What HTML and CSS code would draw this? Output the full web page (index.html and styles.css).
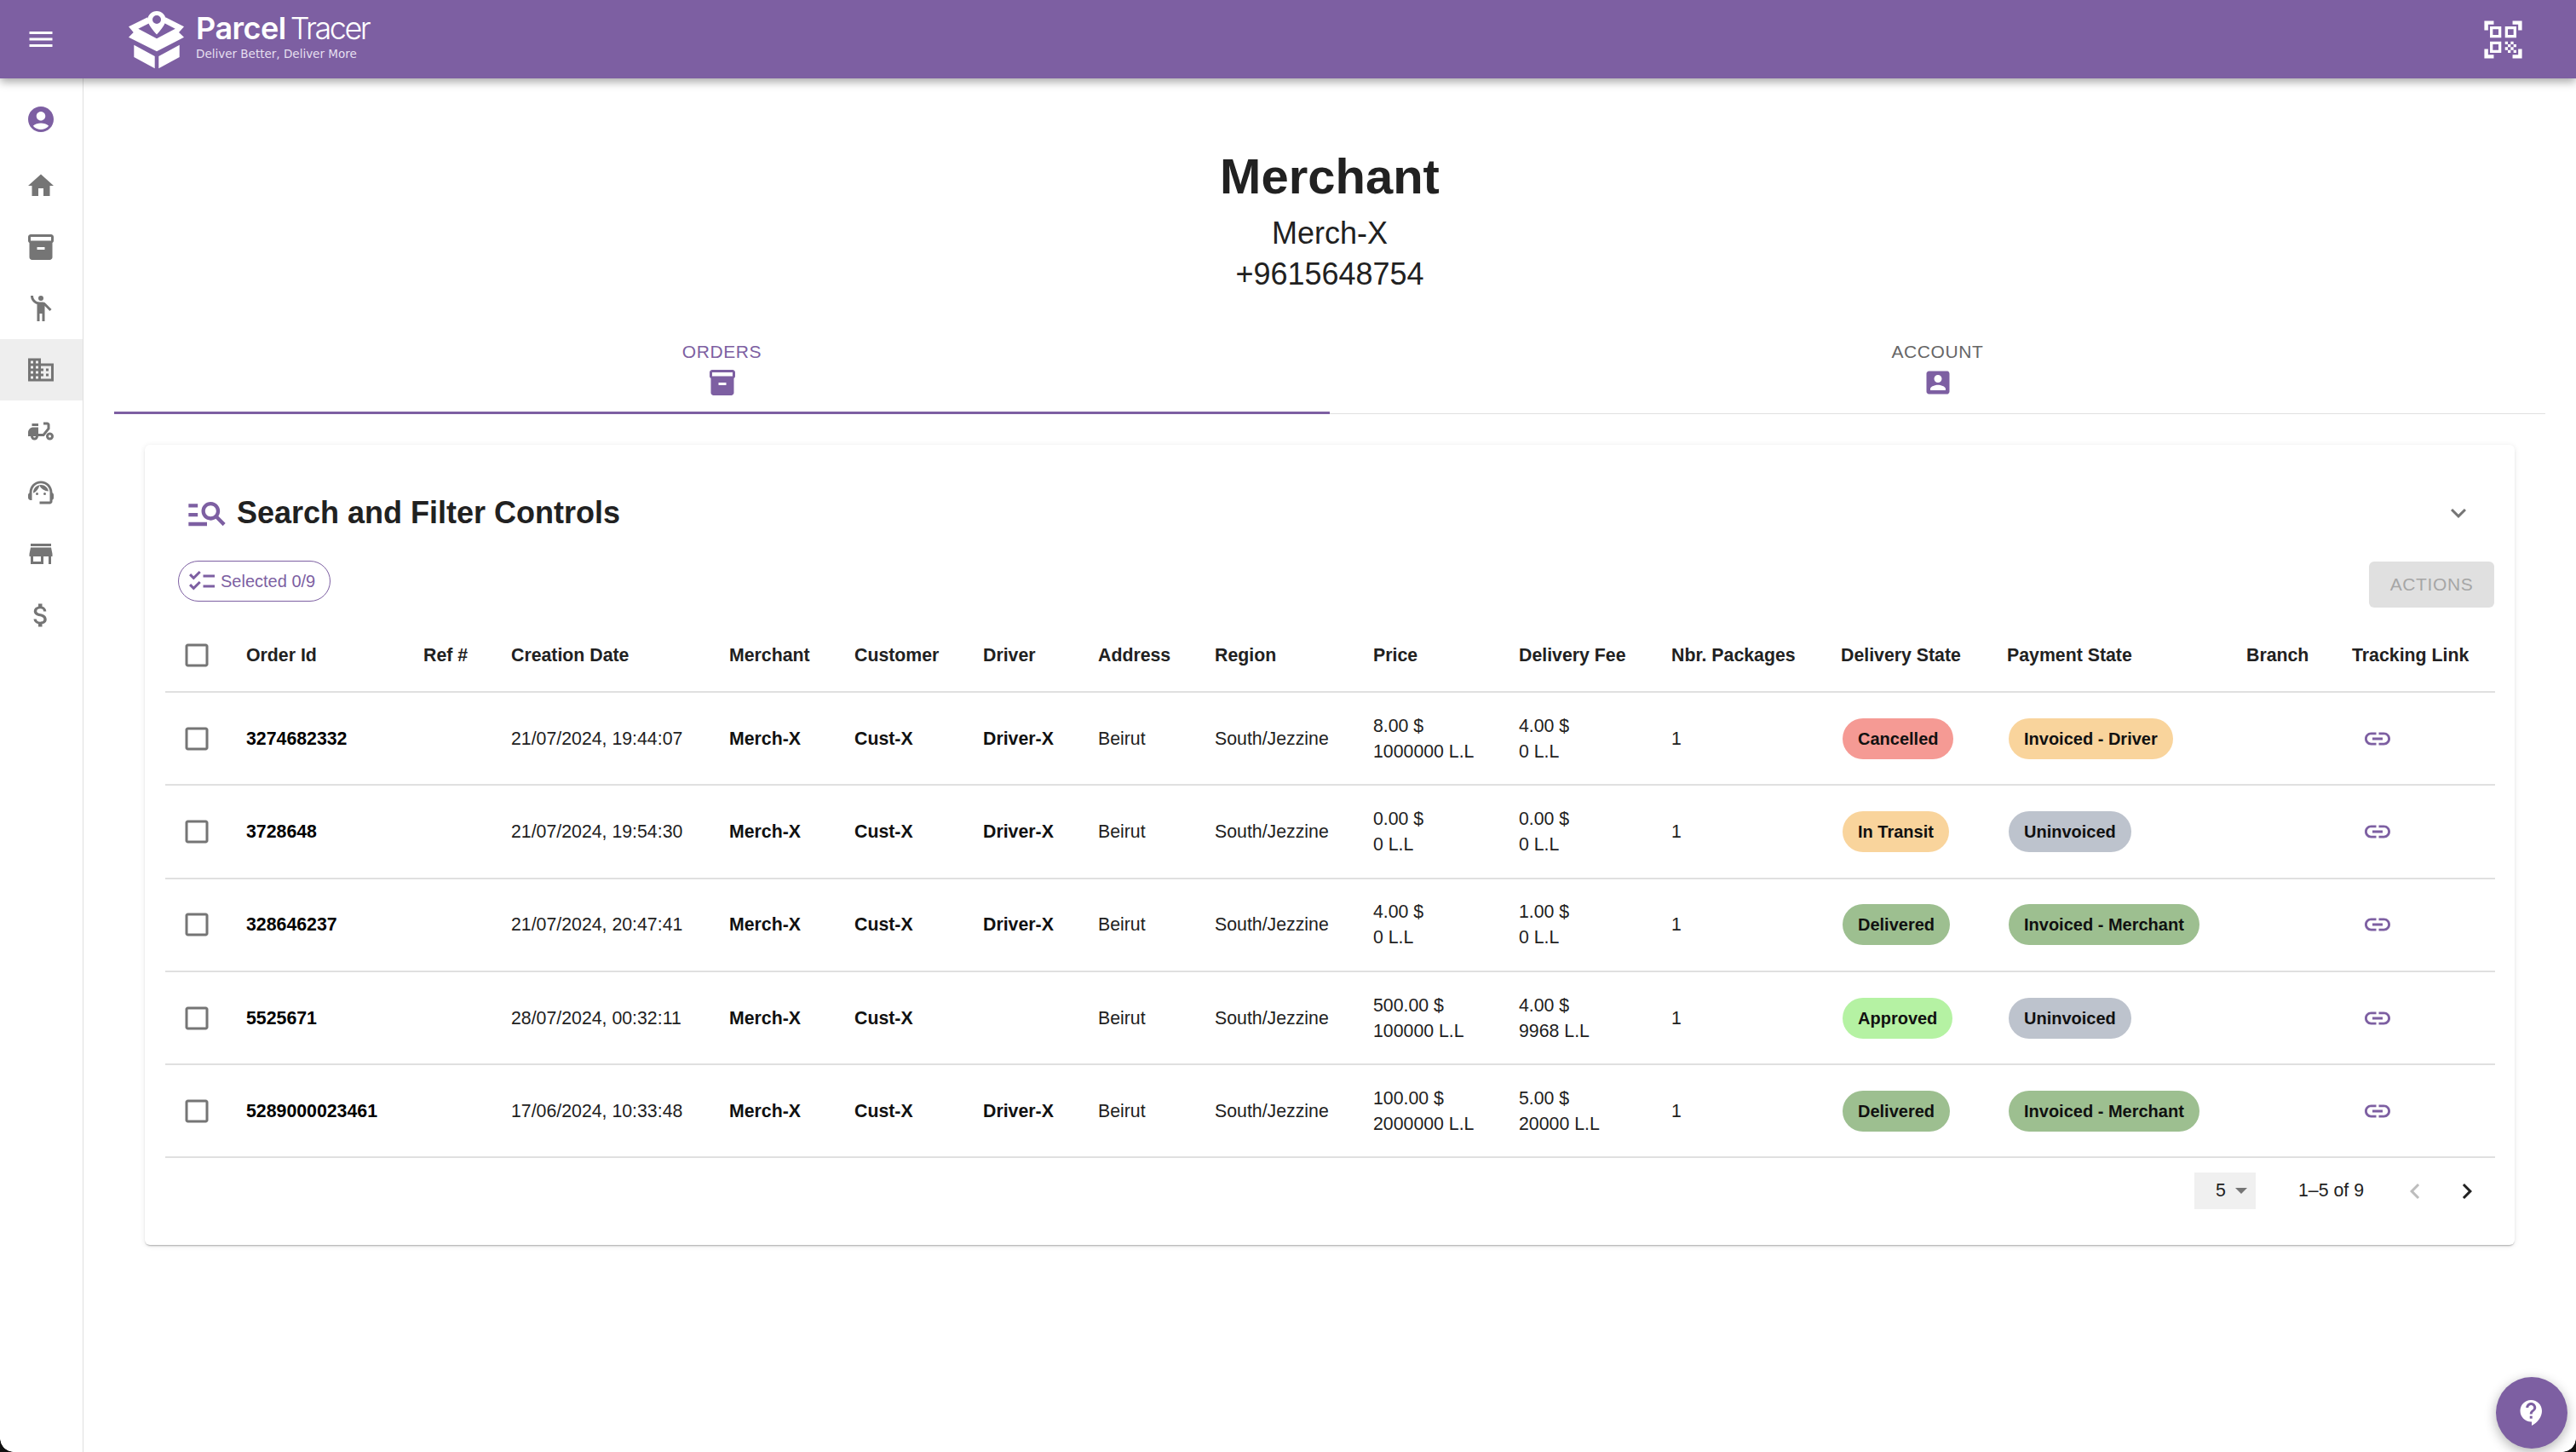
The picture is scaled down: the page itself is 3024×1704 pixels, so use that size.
FILE: index.html
```html
<!DOCTYPE html>
<html lang="en">
<head>
    <meta charset="UTF-8">
    <title>Parcel Tracer</title>
    <link rel="stylesheet" href="styles.css">
</head>
<body>
    <!-- shared icons -->
    <svg class="sprite">
        <symbol id="i-box" viewBox="0 0 24 24"><path d="M20 2H4c-1 0-2 .9-2 2v3.01c0 .72.43 1.34 1 1.69V20c0 1.1 1.1 2 2 2h14c.9 0 2-.9 2-2V8.7c.57-.35 1-.97 1-1.69V4c0-1.1-1-2-2-2zm-5 12H9v-2h6v2zm5-7H4V4l16-.02V7z"/></symbol>
        <symbol id="i-check" viewBox="0 0 24 24"><path d="M19 5v14H5V5h14m0-2H5c-1.1 0-2 .9-2 2v14c0 1.1.9 2 2 2h14c1.1 0 2-.9 2-2V5c0-1.1-.9-2-2-2z"/></symbol>
        <symbol id="i-link" viewBox="0 0 24 24"><path d="M3.9 12c0-1.71 1.39-3.1 3.1-3.1h4V7H7c-2.76 0-5 2.24-5 5s2.24 5 5 5h4v-1.9H7c-1.71 0-3.1-1.39-3.1-3.1zM8 13h8v-2H8v2zm9-6h-4v1.9h4c1.71 0 3.1 1.39 3.1 3.1s-1.39 3.1-3.1 3.1h-4V17h4c2.76 0 5-2.24 5-5s-2.24-5-5-5z"/></symbol>
    </svg>

    <header class="topbar">
        <svg class="icon menu-btn" viewBox="0 0 24 24"><path d="M3 18h18v-2H3v2zm0-5h18v-2H3v2zm0-7v2h18V6H3z"/></svg>
        <div class="logo">
            <svg class="logo-mark" viewBox="0 0 66 70">
                <path fill-rule="evenodd" d="M33 1c5.800 0 10.500 4.500 10.500 10C43.500 17 37 24 33 28.500 29 24 22.500 17 22.500 11 22.500 5.500 27.200 1 33 1zm0 5a5 5 0 1 0 0 10 5 5 0 0 0 0-10z"/>
                <path d="M0 19.300 22.300 8.300 24.700 15 11.300 21.700 33 33.300 54.700 21.700 41.700 15 43.300 8.300 65 19.300 59 26 65 31.700 33 48.300 0 31.700 5.700 26z"/>
                <path d="M6.300 40.700 30.700 54V68.300L6.300 55zM59.700 40.700 35.300 54V68.300L59.700 55z"/>
            </svg>
            <div class="logo-text">
                <div class="logo-name"><b>Parcel</b><span>Tracer</span></div>
                <div class="logo-tag">Deliver Better, Deliver More</div>
            </div>
        </div>
        <svg class="icon qr-btn" viewBox="0 0 24 24"><path d="M9.5 6.5v3h-3v-3h3M11 5H5v6h6V5zm-1.5 9.5v3h-3v-3h3M11 13H5v6h6v-6zm6.5-6.5v3h-3v-3h3M19 5h-6v6h6V5zm-6 8h1.5v1.5H13V13zm1.5 1.5H16V16h-1.5v-1.5zM16 13h1.5v1.5H16V13zm-3 3h1.5v1.5H13V16zm1.5 1.5H16V19h-1.5v-1.5zM16 16h1.5v1.5H16V16zm1.5-1.5H19V16h-1.5v-1.5zm0 3H19V19h-1.5v-1.5zM22 7h-2V4h-3V2h5v5zm0 15v-5h-2v3h-3v2h5zM2 22h5v-2H4v-3H2v5zM2 2v5h2V4h3V2H2z"/></svg>
    </header>

    <div class="layout">
        <nav class="sidebar">
            <div class="nav-item nav-first"><svg class="icon purple" viewBox="0 0 24 24"><path d="M12 2C6.48 2 2 6.48 2 12s4.48 10 10 10 10-4.48 10-10S17.52 2 12 2zm0 4c1.93 0 3.5 1.57 3.5 3.5S13.93 13 12 13s-3.5-1.57-3.5-3.5S10.07 6 12 6zm0 14c-2.03 0-4.43-.82-6.14-2.88C7.55 15.8 9.68 15 12 15s4.45.8 6.14 2.12C16.43 19.18 14.03 20 12 20z"/></svg></div>
            <div class="nav-item"><svg class="icon" viewBox="0 0 24 24"><path d="M10 20v-6h4v6h5v-8h3L12 3 2 12h3v8z"/></svg></div>
            <div class="nav-item"><svg class="icon"><use href="#i-box"/></svg></div>
            <div class="nav-item"><svg class="icon" viewBox="0 0 24 24"><circle cx="12" cy="4" r="2"/><path d="M15.89 8.11C15.5 7.72 14.83 7 13.53 7h-2.54C8.24 6.99 6 4.75 6 2H4c0 3.16 2.11 5.84 5 6.71V22h2v-6h2v6h2V10.05L18.95 14l1.41-1.41-4.47-4.48z"/></svg></div>
            <div class="nav-item active"><svg class="icon" viewBox="0 0 24 24"><path d="M12 7V3H2v18h20V7H12zM6 19H4v-2h2v2zm0-4H4v-2h2v2zm0-4H4V9h2v2zm0-4H4V5h2v2zm4 12H8v-2h2v2zm0-4H8v-2h2v2zm0-4H8V9h2v2zm0-4H8V5h2v2zm10 12h-8v-2h2v-2h-2v-2h2v-2h-2V9h8v10zm-2-8h-2v2h2v-2zm0 4h-2v2h2v-2z"/></svg></div>
            <div class="nav-item"><svg class="icon" viewBox="0 0 24 24"><path d="M19 7c0-1.1-.9-2-2-2h-3v2h3v2.65L13.52 14H10V9H6c-2.21 0-4 1.79-4 4v3h2c0 1.66 1.34 3 3 3s3-1.34 3-3h4.48L19 10.35V7zM7 17c-.55 0-1-.45-1-1h2c0 .55-.45 1-1 1z"/><path d="M5 6h5v2H5zM19 13c-1.66 0-3 1.34-3 3s1.34 3 3 3 3-1.34 3-3-1.34-3-3-3zm0 4c-.55 0-1-.45-1-1s.45-1 1-1 1 .45 1 1-.45 1-1 1z"/></svg></div>
            <div class="nav-item"><svg class="icon" viewBox="0 0 24 24"><path d="M21 12.22C21 6.73 16.74 3 12 3c-4.69 0-9 3.65-9 9.28-.6.34-1 .98-1 1.72v2c0 1.1.9 2 2 2h1v-6.1c0-3.87 3.13-7 7-7s7 3.13 7 7V19h-8v2h8c1.1 0 2-.9 2-2v-1.22c.59-.31 1-.92 1-1.64v-2.3c0-.7-.41-1.31-1-1.62z"/><circle cx="9" cy="13" r="1"/><circle cx="15" cy="13" r="1"/><path d="M18 11.03C17.52 8.18 15.04 6 12.05 6c-3.03 0-6.29 2.51-6.03 6.45 2.47-1.01 4.33-3.21 4.86-5.89 1.31 2.63 4 4.44 7.12 4.47z"/></svg></div>
            <div class="nav-item"><svg class="icon" viewBox="0 0 24 24"><path d="M20 4H4v2h16V4zm1 10v-2l-1-5H4l-1 5v2h1v6h10v-6h4v6h2v-6h1zm-9 4H6v-4h6v4z"/></svg></div>
            <div class="nav-item"><svg class="icon" viewBox="0 0 24 24"><path d="M11.8 10.9c-2.27-.59-3-1.2-3-2.15 0-1.09 1.01-1.85 2.7-1.85 1.78 0 2.44.85 2.5 2.1h2.21c-.07-1.72-1.12-3.3-3.21-3.81V3h-3v2.16c-1.94.42-3.5 1.68-3.5 3.61 0 2.31 1.91 3.46 4.7 4.13 2.5.6 3 1.48 3 2.41 0 .69-.49 1.79-2.7 1.79-2.06 0-2.87-.92-2.98-2.1h-2.2c.12 2.19 1.76 3.42 3.68 3.83V21h3v-2.15c1.95-.37 3.5-1.5 3.5-3.55 0-2.84-2.43-3.81-4.7-4.4z"/></svg></div>
        </nav>

        <main class="content">
            <section class="profile">
                <h1>Merchant</h1>
                <div class="profile-line">Merch-X</div>
                <div class="profile-line">+9615648754</div>
            </section>

            <div class="tabs">
                <div class="tab selected">
                    <span>Orders</span>
                    <svg class="icon purple"><use href="#i-box"/></svg>
                </div>
                <div class="tab">
                    <span>Account</span>
                    <svg class="icon purple" viewBox="0 0 24 24"><path d="M3 5v14c0 1.1.89 2 2 2h14c1.1 0 2-.9 2-2V5c0-1.1-.9-2-2-2H5c-1.11 0-2 .9-2 2zm12 4c0 1.66-1.34 3-3 3s-3-1.34-3-3 1.34-3 3-3 3 1.34 3 3zm-9 8c0-2 4-3.1 6-3.1s6 1.1 6 3.1v1H6v-1z"/></svg>
                </div>
            </div>

            <section class="card">
                <div class="filter-head">
                    <div class="filter-title">
                        <svg class="icon purple search-icon" viewBox="0 0 24 24"><path d="M7 9H2V7h5v2zm0 3H2v2h5v-2zm13.59 7-3.83-3.83c-.8.52-1.74.83-2.76.83-2.76 0-5-2.24-5-5s2.24-5 5-5 5 2.24 5 5c0 1.02-.31 1.96-.83 2.75L22 17.59 20.59 19zM17 11c0-1.65-1.35-3-3-3s-3 1.35-3 3 1.35 3 3 3 3-1.35 3-3zM2 19h10v-2H2v2z"/></svg>
                        <h2>Search and Filter Controls</h2>
                    </div>
                    <svg class="icon" viewBox="0 0 24 24"><path d="M16.59 8.59 12 13.17 7.41 8.59 6 10l6 6 6-6z"/></svg>
                </div>

                <div class="toolbar">
                    <div class="selected-chip">
                        <svg class="icon purple" viewBox="0 0 24 24"><path d="M22 7h-9v2h9V7zm0 8h-9v2h9v-2zM5.54 11 2 7.46l1.41-1.41 2.12 2.12 4.24-4.24 1.41 1.41L5.54 11zm0 8L2 15.46l1.41-1.41 2.12 2.12 4.24-4.24 1.41 1.41L5.54 19z"/></svg>
                        <span>Selected 0/9</span>
                    </div>
                    <button class="actions-btn">Actions</button>
                </div>

                <table class="orders">
                    <colgroup>
                        <col class="c-check"><col class="c-id"><col class="c-ref"><col class="c-date"><col class="c-merchant"><col class="c-customer"><col class="c-driver"><col class="c-address"><col class="c-region"><col class="c-price"><col class="c-fee"><col class="c-nbr"><col class="c-delivery"><col class="c-payment"><col class="c-branch"><col class="c-link">
                    </colgroup>
                    <thead>
                        <tr>
                            <th><svg class="icon check"><use href="#i-check"/></svg></th>
                            <th>Order Id</th>
                            <th>Ref #</th>
                            <th>Creation Date</th>
                            <th>Merchant</th>
                            <th>Customer</th>
                            <th>Driver</th>
                            <th>Address</th>
                            <th>Region</th>
                            <th>Price</th>
                            <th>Delivery Fee</th>
                            <th>Nbr. Packages</th>
                            <th>Delivery State</th>
                            <th>Payment State</th>
                            <th>Branch</th>
                            <th>Tracking Link</th>
                        </tr>
                    </thead>
                    <tbody>
                        <tr>
                            <td><svg class="icon check"><use href="#i-check"/></svg></td>
                            <td class="order-id">3274682332</td>
                            <td></td>
                            <td>21/07/2024, 19:44:07</td>
                            <td class="strong">Merch-X</td>
                            <td class="strong">Cust-X</td>
                            <td class="strong">Driver-X</td>
                            <td>Beirut</td>
                            <td>South/Jezzine</td>
                            <td>8.00 $<br>1000000 L.L</td>
                            <td>4.00 $<br>0 L.L</td>
                            <td>1</td>
                            <td><span class="state red">Cancelled</span></td>
                            <td><span class="state orange">Invoiced - Driver</span></td>
                            <td></td>
                            <td class="link-cell"><svg class="icon purple"><use href="#i-link"/></svg></td>
                        </tr>
                        <tr>
                            <td><svg class="icon check"><use href="#i-check"/></svg></td>
                            <td class="order-id">3728648</td>
                            <td></td>
                            <td>21/07/2024, 19:54:30</td>
                            <td class="strong">Merch-X</td>
                            <td class="strong">Cust-X</td>
                            <td class="strong">Driver-X</td>
                            <td>Beirut</td>
                            <td>South/Jezzine</td>
                            <td>0.00 $<br>0 L.L</td>
                            <td>0.00 $<br>0 L.L</td>
                            <td>1</td>
                            <td><span class="state orange">In Transit</span></td>
                            <td><span class="state grey">Uninvoiced</span></td>
                            <td></td>
                            <td class="link-cell"><svg class="icon purple"><use href="#i-link"/></svg></td>
                        </tr>
                        <tr>
                            <td><svg class="icon check"><use href="#i-check"/></svg></td>
                            <td class="order-id">328646237</td>
                            <td></td>
                            <td>21/07/2024, 20:47:41</td>
                            <td class="strong">Merch-X</td>
                            <td class="strong">Cust-X</td>
                            <td class="strong">Driver-X</td>
                            <td>Beirut</td>
                            <td>South/Jezzine</td>
                            <td>4.00 $<br>0 L.L</td>
                            <td>1.00 $<br>0 L.L</td>
                            <td>1</td>
                            <td><span class="state green">Delivered</span></td>
                            <td><span class="state green">Invoiced - Merchant</span></td>
                            <td></td>
                            <td class="link-cell"><svg class="icon purple"><use href="#i-link"/></svg></td>
                        </tr>
                        <tr>
                            <td><svg class="icon check"><use href="#i-check"/></svg></td>
                            <td class="order-id">5525671</td>
                            <td></td>
                            <td>28/07/2024, 00:32:11</td>
                            <td class="strong">Merch-X</td>
                            <td class="strong">Cust-X</td>
                            <td class="strong"></td>
                            <td>Beirut</td>
                            <td>South/Jezzine</td>
                            <td>500.00 $<br>100000 L.L</td>
                            <td>4.00 $<br>9968 L.L</td>
                            <td>1</td>
                            <td><span class="state lime">Approved</span></td>
                            <td><span class="state grey">Uninvoiced</span></td>
                            <td></td>
                            <td class="link-cell"><svg class="icon purple"><use href="#i-link"/></svg></td>
                        </tr>
                        <tr>
                            <td><svg class="icon check"><use href="#i-check"/></svg></td>
                            <td class="order-id">5289000023461</td>
                            <td></td>
                            <td>17/06/2024, 10:33:48</td>
                            <td class="strong">Merch-X</td>
                            <td class="strong">Cust-X</td>
                            <td class="strong">Driver-X</td>
                            <td>Beirut</td>
                            <td>South/Jezzine</td>
                            <td>100.00 $<br>2000000 L.L</td>
                            <td>5.00 $<br>20000 L.L</td>
                            <td>1</td>
                            <td><span class="state green">Delivered</span></td>
                            <td><span class="state green">Invoiced - Merchant</span></td>
                            <td></td>
                            <td class="link-cell"><svg class="icon purple"><use href="#i-link"/></svg></td>
                        </tr>
                    </tbody>
                </table>

                <div class="pagination">
                    <div class="page-size"><span>5</span><i class="caret"></i></div>
                    <div class="page-range">1–5 of 9</div>
                    <svg class="icon page-prev" viewBox="0 0 24 24"><path d="M15.41 16.59 10.83 12l4.58-4.59L14 6l-6 6 6 6 1.41-1.41z"/></svg>
                    <svg class="icon page-next" viewBox="0 0 24 24"><path d="M8.59 16.59 13.17 12 8.59 7.41 10 6l6 6-6 6-1.41-1.41z"/></svg>
                </div>
            </section>
        </main>
    </div>

    <div class="help-fab">
        <svg class="icon" viewBox="0 0 24 24"><path d="M11.5 2C6.81 2 3 5.81 3 10.5S6.81 19 11.5 19h.5v3c4.86-2.34 8-7 8-11.5C20 5.81 16.19 2 11.5 2zm1 14.5h-2v-2h2v2zm0-3.5h-2c0-3.25 3-3 3-5 0-1.1-.9-2-2-2s-2 .9-2 2h-2c0-2.21 1.79-4 4-4s4 1.79 4 4c0 2.5-3 2.75-3 5z"/></svg>
    </div>
    <div class="corner corner-left"></div>
    <div class="corner corner-right"></div>
</body>
</html>
```

FILE: styles.css
```css
* { box-sizing: border-box; }
html, body { height: 100%; }
body { margin: 0; background: #fff; color: #212121; font-family: "Liberation Sans", Arial, sans-serif; font-size: 21.3px; overflow: hidden; }

.sprite { display: none; }
.icon { display: block; width: 36px; height: 36px; fill: #757575; flex: none; }
.icon.purple { fill: #7d5fa2; }

/* Top bar */
.topbar {
    position: relative;
    z-index: 10;
    height: 92px;
    padding: 0 59px 0 30px;
    display: flex;
    align-items: center;
    background: #7d5fa2;
    box-shadow: 0 4px 10px rgba(0,0,0,0.35);
}
.menu-btn { fill: #fff; }
.logo { display: flex; align-items: flex-start; margin-left: 85px; padding-top: 2px; }
.logo-mark { width: 66px; height: 70px; fill: #fff; }
.logo-text { margin-left: 13px; color: #fff; padding-top: 3px; }
.logo-name { font-family: Inter, sans-serif; font-size: 36px; line-height: 36px; white-space: nowrap; }
.logo-name b { font-weight: 600; letter-spacing: -.5px; }
.logo-name span { font-weight: 300; letter-spacing: -2.5px; margin-left: 5px; }
.logo-tag { font-family: "DejaVu Sans", sans-serif; font-size: 13.5px; line-height: 18px; color: #e6dff0; margin-top: 3px; white-space: nowrap; }
.qr-btn { width: 53px; height: 53px; fill: #fff; margin-left: auto; }

/* Layout */
.layout { display: flex; height: calc(100% - 92px); }
.sidebar { width: 98px; flex: none; border-right: 1px solid #e0e0e0; }
.nav-item { height: 72px; display: flex; align-items: center; justify-content: center; padding-right: 1px; }
.nav-first { height: 90px; padding-top: 6px; }
.nav-item.active { background: #eee; }
.content { flex: 1; min-width: 0; padding: 0 36px; }

/* Merchant heading */
.profile { text-align: center; padding-top: 80px; }
.profile h1 { margin: 0 0 8px; font-size: 58px; line-height: 70px; }
.profile-line { font-size: 36px; line-height: 48px; }

/* Tabs */
.tabs { display: flex; margin-top: 55px; border-bottom: 1px solid #e0e0e0; }
.tab { flex: 1; height: 84px; display: flex; flex-direction: column; align-items: center; font-size: 21px; line-height: 24px; letter-spacing: .6px; text-transform: uppercase; color: #666; }
.tab span { margin-bottom: 6px; }
.tab.selected { color: #7d5fa2; border-bottom: 3px solid #7d5fa2; margin-bottom: -1px; height: 85px; }

/* Card */
.card {
    margin: 36px 36px 0;
    height: 939px;
    padding: 0 24px;
    background: #fff;
    border-radius: 6px;
    box-shadow: 0 2px 2px -1px rgba(0,0,0,0.3), 0 1px 6px rgba(0,0,0,0.1);
}
.filter-head { display: flex; align-items: center; justify-content: space-between; padding: 53px 24px 0 28px; height: 107px; }
.filter-title { display: flex; align-items: center; }
.search-icon { width: 52px; height: 52px; margin-right: 9px; margin-left: -5px; }
.filter-title h2 { margin: 0; font-size: 36px; line-height: 52px; }

.toolbar { display: flex; justify-content: space-between; align-items: flex-start; padding: 29px 0 0 15px; }
.selected-chip { display: flex; align-items: center; height: 48px; padding: 0 17px 0 9px; border: 1px solid #7d5fa2; border-radius: 24px; color: #7d5fa2; font-size: 20px; }
.selected-chip .icon { margin-right: 4px; }
.actions-btn { height: 54px; width: 147px; margin-top: 1px; border: 0; border-radius: 6px; background: #e0e0e0; color: #a6a6a6; font-family: inherit; font-size: 21px; letter-spacing: .6px; text-transform: uppercase; }

/* Orders table */
.orders { width: 2735px; table-layout: fixed; border-collapse: collapse; margin-top: -11px; }
.orders th, .orders td { padding: 0; text-align: left; border-bottom: 2px solid #e0e0e0; white-space: nowrap; vertical-align: middle; }
.orders th { height: 110px; font-weight: 700; color: #212121; padding-top: 25px; }
.orders td { height: 109.3px; line-height: 30px; }
.orders .check { margin-left: 19px; }
.strong { font-weight: 700; color: #111; }
.order-id { font-weight: 700; color: #000; }
.link-cell .icon { margin-left: 12px; }

.c-check { width: 95px; }
.c-id { width: 208px; }
.c-ref { width: 103px; }
.c-date { width: 256px; }
.c-merchant { width: 147px; }
.c-customer { width: 151px; }
.c-driver { width: 135px; }
.c-address { width: 137px; }
.c-region { width: 186px; }
.c-price { width: 171px; }
.c-fee { width: 179px; }
.c-nbr { width: 199px; }
.c-delivery { width: 195px; }
.c-payment { width: 281px; }
.c-branch { width: 124px; }
.c-link { width: 168px; }

.state { display: inline-block; height: 48px; padding: 0 18px; border-radius: 24px; font-size: 20px; font-weight: 700; line-height: 48px; color: #111; margin-left: 2px; }
.state.red { background: #f59a94; }
.state.orange { background: #f9d49c; }
.state.grey { background: #bdc3cd; }
.state.green { background: #9dbf90; }
.state.lime { background: #b5f2a3; }

/* Pagination */
.pagination { display: flex; align-items: center; height: 77px; }
.page-size { display: flex; align-items: center; width: 72px; height: 43px; margin-left: auto; padding-left: 25px; background: #f0f0f0; }
.caret { width: 0; height: 0; margin-left: 11px; border: 7.5px solid transparent; border-top: 7.5px solid #757575; border-bottom: 0; }
.page-range { margin-left: 50px; }
.page-prev { fill: #bdbdbd; margin-left: 42px; }
.page-next { fill: #212121; margin-left: 25px; margin-right: 14px; }

/* Help button and the window's rounded corners */
.help-fab { position: fixed; right: 10px; bottom: 4px; width: 84px; height: 84px; border-radius: 50%; background: #7d5fa2; display: flex; align-items: center; justify-content: center; box-shadow: 0 4px 14px rgba(0,0,0,0.3); }
.help-fab .icon { fill: #fff; }
.corner { position: fixed; bottom: 0; width: 16px; height: 16px; }
.corner-left { left: 0; background: radial-gradient(circle at 100% 0, transparent 15.5px, #111 16px); }
.corner-right { right: 0; background: radial-gradient(circle at 0 0, transparent 15.5px, #111 16px); }
```
